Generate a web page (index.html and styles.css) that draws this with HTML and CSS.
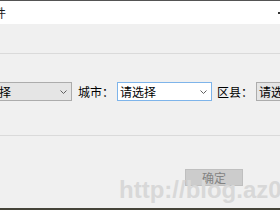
FILE: index.html
```html
<!DOCTYPE html>
<html lang="zh">
<head>
<meta charset="utf-8">
<link rel="stylesheet" href="styles.css">
</head>
<body>
<div class="window">
  <div class="topline"></div>
  <div class="titlebar">
    <span class="title">件</span>
    <span class="ctrl"></span>
  </div>
  <div class="band"></div>
  <div class="middle">
    <div class="row">
      <div class="combo combo-wide gray"><span class="ctext">请选择</span><svg class="arrow" width="7" height="4" viewBox="0 0 7 4"><path d="M0.5 0.5 L3.5 3.5 L6.5 0.5" fill="none" stroke="#606060" stroke-width="1"/></svg></div>
      <span class="label first">城市：</span>
      <div class="combo combo-mid focus"><span class="ctext">请选择</span><svg class="arrow" width="7" height="4" viewBox="0 0 7 4"><path d="M0.5 0.5 L3.5 3.5 L6.5 0.5" fill="none" stroke="#606060" stroke-width="1"/></svg></div>
      <span class="label second">区县：</span>
      <div class="combo combo-wide gray"><span class="ctext">请选择</span><svg class="arrow" width="7" height="4" viewBox="0 0 7 4"><path d="M0.5 0.5 L3.5 3.5 L6.5 0.5" fill="none" stroke="#606060" stroke-width="1"/></svg></div>
    </div>
  </div>
  <div class="bottom">
    <div class="btnrow">
      <button class="btn" disabled>确定</button>
    </div>
    <div class="watermark">http://blog.az0</div>
  </div>
  <div class="desk"></div>
</div>
</body>
</html>
```
FILE: styles.css
```css
html, body {
  margin: 0;
  padding: 0;
}
body {
  width: 280px;
  height: 210px;
  overflow: hidden;
  background: #f0f0f0;
  font-family: "Noto Sans CJK SC", "Noto Sans", sans-serif;
  font-size: 12px;
  color: #000;
}
.window {
  width: 280px;
  height: 210px;
  display: flex;
  flex-direction: column;
  overflow: hidden;
}
.topline {
  height: 1px;
  background: #535353;
  flex-shrink: 0;
}
.titlebar {
  height: 23px;
  background: #ffffff;
  display: flex;
  align-items: center;
  justify-content: space-between;
  flex-shrink: 0;
}
.title {
  margin-left: -6px;
  font-size: 12px;
  line-height: 14px;
  color: #1a1a1a;
}
.ctrl {
  width: 2px;
  height: 2px;
  background: #333;
  margin-top: 0px;
}
.band {
  height: 29px;
  border-bottom: 1px solid #dadada;
  flex-shrink: 0;
}
.middle {
  height: 81px;
  border-bottom: 1px solid #dadada;
  flex-shrink: 0;
}
.row {
  display: flex;
  align-items: center;
  margin-top: 28px;
  margin-left: -28px;
}
.combo {
  flex-shrink: 0;
  height: 19px;
  box-sizing: border-box;
  display: flex;
  align-items: center;
  justify-content: space-between;
  padding-left: 2px;
}
.combo-wide { width: 100px; }
.combo-mid { width: 95px; }
.gray {
  background: #e5e5e5;
  border: 1px solid #acacac;
}
.focus {
  background: #ffffff;
  border: 1px solid #7eb4ea;
}
.ctext {
  font-size: 12px;
  line-height: 16px;
  white-space: nowrap;
}
.arrow {
  margin-right: 4px;
  flex-shrink: 0;
}
.label {
  flex-shrink: 0;
  width: 36px;
  margin-right: 3px;
  font-size: 12px;
  line-height: 16px;
  white-space: nowrap;
}
.label.first { margin-left: 6px; }
.label.second { margin-left: 5px; }
.bottom {
  height: 72px;
  position: relative;
  flex-shrink: 0;
}
.btnrow {
  display: flex;
  justify-content: flex-end;
  padding-top: 33px;
  padding-right: 37px;
}
.btn {
  width: 58px;
  height: 17px;
  box-sizing: border-box;
  margin: 0;
  padding: 0;
  background: #cccccc;
  border: 1px solid #bfbfbf;
  color: #838383;
  font-family: "Noto Sans CJK SC", sans-serif;
  font-size: 12px;
  line-height: 15px;
}
.watermark {
  position: absolute;
  left: 119px;
  top: 42px;
  font-family: "Liberation Sans", Arial, sans-serif;
  font-weight: bold;
  font-size: 24px;
  line-height: 24px;
  color: #d8d8d8;
  white-space: nowrap;
  pointer-events: none;
}
.desk {
  height: 2px;
  background: #454338;
  flex-shrink: 0;
}
```
